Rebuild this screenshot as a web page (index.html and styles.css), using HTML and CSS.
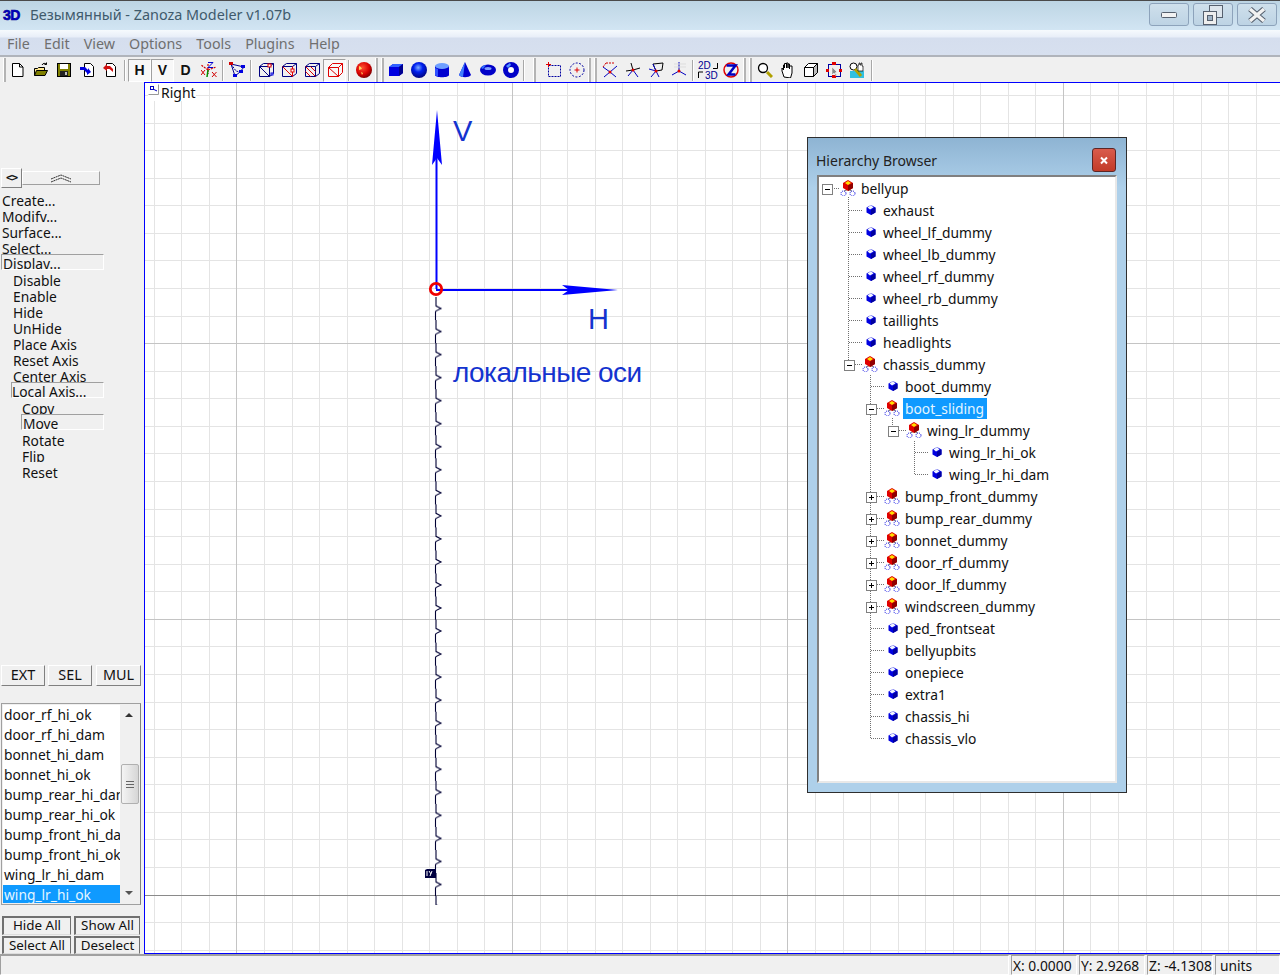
FILE: index.html
```html
<!DOCTYPE html>
<html lang="ru">
<head>
    <meta charset="UTF-8">
    <meta name="viewport" content="width=device-width, initial-scale=1.0">
    <title>Zanoza Modeler</title>
    <link rel="stylesheet" href="styles.css">
</head>
<body>
    <!-- Общие иконки -->
    <svg class="defs" width="0" height="0">
        <symbol id="i-new" viewBox="0 0 16 16"><path d="M2.500 1.500h7l3.500 3.500v9.500H2.500z" fill="#fff" stroke="#000"/><path d="M9.500 1.500v3.500h3.500" fill="none" stroke="#000"/></symbol>
        <symbol id="i-open" viewBox="0 0 16 16"><path d="M1.500 13.500v-7h3l1-1h6v3" fill="#ffe890" stroke="#000"/><path d="M1.500 13.500l2-5h11l-2.500 5z" fill="#808000" stroke="#000"/><path d="M9 3c1-2 3-2 4.500-1M13.500 .5v2h-2" fill="none" stroke="#000"/></symbol>
        <symbol id="i-save" viewBox="0 0 16 16" shape-rendering="crispEdges"><rect x="1.500" y="1.500" width="13" height="13" fill="#808000" stroke="#000"/><rect x="4" y="2" width="8" height="5" fill="#fff"/><rect x="4" y="9" width="8" height="5" fill="#222"/><rect x="9" y="10" width="2" height="3" fill="#c0c0c0"/></symbol>
        <symbol id="i-doc-in" viewBox="0 0 16 16"><path d="M5.500 1.500h6l3 3v10h-9z" fill="#fff" stroke="#000"/><path d="M1 5h5l3 3V6l3 4-4 3v-2L5 8H1z" fill="#0000e0"/></symbol>
        <symbol id="i-doc-out" viewBox="0 0 16 16"><path d="M4.500 1.500h6l3 3v10h-9z" fill="#fff" stroke="#000"/><path d="M1 6l4-4v2h3l3 3v3L7.500 7H5v2z" fill="#d01010"/></symbol>
        <symbol id="i-axes" viewBox="0 0 16 16"><path d="M7 2v10M7 8l8-3M7 8L0 3" fill="none" stroke="#d00000" stroke-width="1.200" stroke-dasharray="2 1"/><path d="M7 8l-1 7" stroke="#009000" stroke-width="1.500"/><path d="M7 .5h5M12 .5l-5 5M7 5.500h5" fill="none" stroke="#0000d0"/><path d="M11 10l4.500 5M15.500 10l-4.500 5M0 8l4 5M4 8l-4 5" stroke="#d00000"/></symbol>
        <symbol id="i-link" viewBox="0 0 16 16"><path d="M2 2l13 3-4 5-5 4z" fill="none" stroke="#000090"/><path d="M2 2l5 7 4 1" fill="none" stroke="#000090" stroke-dasharray="2 1"/><g shape-rendering="crispEdges"><rect x="0" y="0" width="4" height="3" fill="#d00000"/><rect x="12" y="3" width="4" height="3" fill="#0000e0"/><rect x="10" y="8" width="4" height="3" fill="#0000e0"/><rect x="4" y="12" width="4" height="3" fill="#0000e0"/></g></symbol>
        <symbol id="i-cube-a" viewBox="0 0 16 16"><path d="M1.500 4.500h10v10h-10zM1.500 4.500l4-3h10v10l-4 3M11.500 4.500l4-3M1.500 4.500l10 10" fill="none" stroke="#000080"/><rect x="10" y="2" width="3" height="3" fill="#fff" stroke="#e00000"/><rect x="13" y="11" width="2" height="2" fill="#fff" stroke="#0000e0"/></symbol>
        <symbol id="i-cube-b" viewBox="0 0 16 16"><path d="M1.500 4.500h10v10h-10zM1.500 4.500l4-3h10v10l-4 3M11.500 4.500l4-3" fill="none" stroke="#000080"/><path d="M11.500 4.500v10M1.500 4.500l10 10" fill="none" stroke="#e00000"/><rect x="10" y="7" width="3" height="3" fill="#fff" stroke="#e00000"/></symbol>
        <symbol id="i-cube-c" viewBox="0 0 16 16"><path d="M1.500 4.500h10v10h-10zM1.500 4.500l4-3h10v10l-4 3M11.500 4.500l4-3" fill="none" stroke="#000080"/><path d="M1.500 4.500l10 10M1.500 9.500l5 5M6.500 4.500l5 5" fill="none" stroke="#e00000"/></symbol>
        <symbol id="i-cube-d" viewBox="0 0 16 16"><path d="M1.500 5.500h10v9h-10zM1.500 5.500l4-4h10v9l-4 4M11.500 5.500l4-4M1.500 5.500l10 9" fill="none" stroke="#e00000"/></symbol>
        <radialGradient id="g-red" cx=".4" cy=".35" r=".7"><stop offset="0" stop-color="#ff5030"/><stop offset=".6" stop-color="#d80000"/><stop offset="1" stop-color="#700000"/></radialGradient>
        <radialGradient id="g-blue" cx=".45" cy=".35" r=".7"><stop offset="0" stop-color="#80b0ff"/><stop offset=".4" stop-color="#0020f0"/><stop offset="1" stop-color="#000070"/></radialGradient>
        <symbol id="i-ball-red" viewBox="0 0 16 16"><circle cx="8" cy="8" r="8" fill="url(#g-red)"/><path d="M3 4l2 1 1 2-3 1zM5 10l2 1-1 2z" fill="#ffd060"/></symbol>
        <symbol id="i-box" viewBox="0 0 16 16"><path d="M1 5l4-3h10v9l-4 3H1z" fill="#0000e0"/><path d="M1 5l4-3h10l-4 3z" fill="#3060ff"/><path d="M11 5l4-3v9l-4 3z" fill="#000090"/></symbol>
        <symbol id="i-ball" viewBox="0 0 16 16"><circle cx="8" cy="8" r="8" fill="url(#g-blue)"/></symbol>
        <symbol id="i-can" viewBox="0 0 16 16"><path d="M1 4v9c0 3 14 3 14 0V4z" fill="#0000d0"/><ellipse cx="8" cy="4" rx="7" ry="3" fill="#70a0ff"/><path d="M1 6v7l3 2V7z" fill="#3050ff"/></symbol>
        <symbol id="i-cone" viewBox="0 0 16 16"><path d="M8 0l6 13c-2 3-10 3-12 0z" fill="#0000d0"/><path d="M8 0L2 13c1 1 3 2 4 2z" fill="#4080ff"/></symbol>
        <symbol id="i-disc" viewBox="0 0 16 16"><ellipse cx="8" cy="8" rx="8" ry="5.500" fill="#0000c8"/><ellipse cx="8" cy="6.500" rx="3.500" ry="1.500" fill="#80a0ff"/><path d="M1 6c1-2 3-3 5-3L3 7z" fill="#3070ff"/></symbol>
        <symbol id="i-ring" viewBox="0 0 16 16"><circle cx="8" cy="8" r="5.500" fill="none" stroke="#0000c8" stroke-width="5"/><circle cx="8" cy="8" r="2.500" fill="#fff"/><path d="M3 4l4-3 1 2-3 3z" fill="#5090ff"/></symbol>
        <symbol id="i-sel-rect" viewBox="0 0 16 16"><rect x="2.500" y="3.500" width="12" height="11" fill="none" stroke="#0000a0" stroke-dasharray="2 1"/><path d="M0 2.500h5M2.500 0v5" stroke="#e00000"/></symbol>
        <symbol id="i-sel-circle" viewBox="0 0 16 16"><circle cx="8" cy="8" r="7" fill="none" stroke="#0000a0" stroke-dasharray="2 1.500"/><path d="M5.500 8h5M8 5.500v5" stroke="#e00000"/></symbol>
        <symbol id="i-star-a" viewBox="0 0 16 16"><path d="M8 10L1 5M8 10l7-6M8 10l-6 5M8 10l6 5" fill="none" stroke="#0000c0"/><path d="M4 1h8M1 5l3-4" fill="none" stroke="#d00000" stroke-dasharray="2 1"/><circle cx="8" cy="10" r="1.500" fill="#e00000"/></symbol>
        <symbol id="i-star-b" viewBox="0 0 16 16"><path d="M8 8L1 9M8 8l7-2M8 8L6 1" fill="none" stroke="#000"/><path d="M8 8l-5 6M8 8l5 7" fill="none" stroke="#0000c0"/><circle cx="8" cy="8" r="1.500" fill="#e00000"/></symbol>
        <symbol id="i-star-c" viewBox="0 0 16 16"><path d="M5 2l10-1-1 7-6 1z" fill="none" stroke="#000"/><path d="M8 9L1 7M8 9l-5 6M8 9l3 6M5 2l3 7" fill="none" stroke="#0000c0"/><circle cx="8" cy="9" r="1.500" fill="#e00000"/></symbol>
        <symbol id="i-star-d" viewBox="0 0 16 16"><path d="M8 0v9M8 9l7 4M8 9l-7 4" fill="none" stroke="#0000c0"/><path d="M3 2h12M3 5h12" stroke="#ddd"/><circle cx="8" cy="9" r="1.500" fill="#e00000"/></symbol>
        <symbol id="i-2d3d" viewBox="0 0 20 18"><text x="0" y="8" class="icon-text">2D</text><text x="7" y="17.500" class="icon-text">3D</text><path d="M19.500 2v5.500H15M.5 17v-6H5" fill="none" stroke="#000"/></symbol>
        <symbol id="i-ztoggle" viewBox="0 0 16 16"><circle cx="8" cy="8" r="7" fill="none" stroke="#e00000" stroke-width="1.500"/><path d="M3.500 3.500h9l-7 9h7" fill="none" stroke="#0000c0" stroke-width="2.500"/></symbol>
        <symbol id="i-zoom" viewBox="0 0 16 16"><circle cx="6" cy="6" r="4.500" fill="#fff" stroke="#000" stroke-width="1.300"/><path d="M10 10l5 5" stroke="#b0a000" stroke-width="3"/></symbol>
        <symbol id="i-hand" viewBox="0 0 16 16"><path d="M4 15l-2-6V6l1.500 2V3h1v3-4.500h2V6 1h1.500v5-4h1.500v5-3H12v7l-1.500 5z" fill="#fff" stroke="#000"/></symbol>
        <symbol id="i-white-cube" viewBox="0 0 16 16"><path d="M1.500 5.500l4-4h9v9l-4 4h-9z" fill="#fff" stroke="#000"/><path d="M10.500 5.500l4-4v9l-4 4z" fill="#bbb" stroke="#000"/><path d="M1.500 5.500h9v9" fill="none" stroke="#000"/></symbol>
        <symbol id="i-transform" viewBox="0 0 16 16"><rect x="2.500" y="2.500" width="12" height="12" fill="none" stroke="#0000a0"/><g fill="#e00000"><rect x="6" y="0" width="4" height="3"/><rect x="6" y="13" width="4" height="3"/><rect x="0" y="7" width="3" height="3"/><rect x="13" y="7" width="3" height="3"/></g><path d="M6 5v8l2-2 2 3 1-1-2-2 2-1z" fill="#888" stroke="#fff" stroke-width=".5"/></symbol>
        <symbol id="i-mix" viewBox="0 0 16 16"><rect x="1" y="9" width="14" height="7" fill="#30c0e0"/><circle cx="4.500" cy="4.500" r="3.500" fill="#fff" stroke="#000"/><path d="M6 7l6 7" stroke="#b0a000" stroke-width="3"/><path d="M9 9V3h1V1h1v2h1V1h1v3h1v5z" fill="#fff" stroke="#000" stroke-width=".7"/></symbol>
        <symbol id="n-group" viewBox="0 0 16 16"><path d="M8 9L3 12M8 9l5 3" stroke="#808080" stroke-width="1.200"/><circle cx="3.500" cy="13.500" r="2.500" fill="#fff" stroke="#0000e0" stroke-dasharray="1 1"/><circle cx="12.500" cy="13.500" r="2.500" fill="#fff" stroke="#0000e0" stroke-dasharray="1 1"/><path d="M3 3l5-3 5 3v5l-5 3-5-3z" fill="#e00000"/><path d="M5 3l3-2 3 2-3 2z" fill="#ffe000"/><path d="M8 5.500l5-2.500v5l-5 3z" fill="#900000"/></symbol>
        <symbol id="n-leaf" viewBox="0 0 16 16"><path d="M9 3l4.500 2.500v5L9 13l-4.500-2.500v-5z" fill="#0000e0"/><path d="M9 3L5.500 5.500 8 7.500l3.500-2z" fill="#f0f4ff"/><path d="M9 8l4.500-2.500v5L9 13z" fill="#0000a0"/></symbol>
    </svg>

    <div class="titlebar">
        <span class="app-logo">3D</span>
        <span class="app-title">Безымянный - Zanoza Modeler v1.07b</span>
        <div class="win-buttons">
            <div class="win-btn"><svg width="18" height="8"><rect x="1.500" y="1.500" width="15" height="5" rx="1" fill="#f2f2f2" stroke="#56606e"/></svg></div>
            <div class="win-btn"><svg width="22" height="22"><rect x="7.500" y="1.500" width="13" height="12" fill="#dde5ec" stroke="#56606e"/><rect x="1.500" y="7.500" width="13" height="13" fill="#eee" stroke="#56606e"/><rect x="5.500" y="11.500" width="5" height="5" fill="#9fb3c6" stroke="#56606e"/></svg></div>
            <div class="win-btn"><svg width="20" height="16"><path d="M3 2l14 12M17 2L3 14" fill="none" stroke="#56606e" stroke-width="5.500"/><path d="M3 2l14 12M17 2L3 14" fill="none" stroke="#f2f2f2" stroke-width="3.500"/></svg></div>
        </div>
    </div>

    <div class="menubar">
        <span>File</span><span>Edit</span><span>View</span><span>Options</span><span>Tools</span><span>Plugins</span><span>Help</span>
    </div>

    <div class="toolbar">
        <span class="grip first"></span>
        <div class="tool"><svg><use href="#i-new"/></svg></div>
        <div class="tool"><svg><use href="#i-open"/></svg></div>
        <div class="tool"><svg><use href="#i-save"/></svg></div>
        <div class="tool"><svg><use href="#i-doc-in"/></svg></div>
        <div class="tool"><svg><use href="#i-doc-out"/></svg></div>
        <span class="sep"></span>
        <div class="tool pressed"><b>H</b></div>
        <div class="tool pressed"><b>V</b></div>
        <div class="tool"><b>D</b></div>
        <div class="tool"><svg><use href="#i-axes"/></svg></div>
        <span class="sep tight"></span>
        <div class="tool"><svg><use href="#i-link"/></svg></div>
        <span class="sep wide"></span>
        <div class="tool"><svg><use href="#i-cube-a"/></svg></div>
        <div class="tool"><svg><use href="#i-cube-b"/></svg></div>
        <div class="tool"><svg><use href="#i-cube-c"/></svg></div>
        <div class="tool pressed"><svg><use href="#i-cube-d"/></svg></div>
        <span class="sep after-cubes"></span>
        <div class="tool"><svg><use href="#i-ball-red"/></svg></div>
        <span class="grip"></span>
        <span class="grip near"></span>
        <div class="tool"><svg><use href="#i-box"/></svg></div>
        <div class="tool"><svg><use href="#i-ball"/></svg></div>
        <div class="tool"><svg><use href="#i-can"/></svg></div>
        <div class="tool"><svg><use href="#i-cone"/></svg></div>
        <div class="tool"><svg><use href="#i-disc"/></svg></div>
        <div class="tool"><svg><use href="#i-ring"/></svg></div>
        <span class="sep tail"></span>
        <span class="grip far"></span>
        <div class="tool"><svg><use href="#i-sel-rect"/></svg></div>
        <div class="tool"><svg><use href="#i-sel-circle"/></svg></div>
        <span class="grip"></span>
        <span class="grip mid"></span>
        <div class="tool"><svg><use href="#i-star-a"/></svg></div>
        <div class="tool"><svg><use href="#i-star-b"/></svg></div>
        <div class="tool"><svg><use href="#i-star-c"/></svg></div>
        <div class="tool"><svg><use href="#i-star-d"/></svg></div>
        <span class="sep before-2d"></span>
        <div class="tool"><svg class="wide-ico"><use href="#i-2d3d"/></svg></div>
        <div class="tool"><svg><use href="#i-ztoggle"/></svg></div>
        <span class="grip after-z"></span>
        <span class="grip mid"></span>
        <div class="tool"><svg><use href="#i-zoom"/></svg></div>
        <div class="tool"><svg><use href="#i-hand"/></svg></div>
        <div class="tool"><svg><use href="#i-white-cube"/></svg></div>
        <div class="tool"><svg><use href="#i-transform"/></svg></div>
        <div class="tool"><svg><use href="#i-mix"/></svg></div>
        <span class="sep"></span>
    </div>

    <div class="main">
        <div class="side">
            <div class="fold-row">
                <div class="fold-btn">&lt;&gt;</div>
                <div class="fold-bar"><svg width="22" height="9"><path d="M1 5l10-4 10 4M1 8l10-4 10 4" fill="none" stroke="#333" stroke-dasharray="2 .5"/></svg></div>
            </div>

            <div class="cmds">
                <div class="cmd">Create...</div>
                <div class="cmd cut">Modify...</div>
                <div class="cmd">Surface...</div>
                <div class="cmd cut">Select...</div>
                <div class="cmd open">Display...</div>
                <div class="cmd l1">Disable</div>
                <div class="cmd l1">Enable</div>
                <div class="cmd l1">Hide</div>
                <div class="cmd l1">UnHide</div>
                <div class="cmd l1">Place Axis</div>
                <div class="cmd l1">Reset Axis</div>
                <div class="cmd l1 cut">Center Axis</div>
                <div class="cmd l1 open">Local Axis...</div>
                <div class="cmd l2 cut">Copy</div>
                <div class="cmd l2 open">Move</div>
                <div class="cmd l2">Rotate</div>
                <div class="cmd l2 cut">Flip</div>
                <div class="cmd l2">Reset</div>
            </div>

            <div class="mode-row">
                <div class="btn">EXT</div>
                <div class="btn">SEL</div>
                <div class="btn last">MUL</div>
            </div>

            <div class="objects">
                <div class="obj-items">
                    <div>door_rf_hi_ok</div>
                    <div>door_rf_hi_dam</div>
                    <div>bonnet_hi_dam</div>
                    <div>bonnet_hi_ok</div>
                    <div>bump_rear_hi_dam</div>
                    <div>bump_rear_hi_ok</div>
                    <div>bump_front_hi_dam</div>
                    <div>bump_front_hi_ok</div>
                    <div>wing_lr_hi_dam</div>
                    <div class="selected">wing_lr_hi_ok</div>
                </div>
                <div class="scroll">
                    <span class="arrow up"></span>
                    <div class="thumb"><i></i><i></i><i></i></div>
                    <span class="arrow down"></span>
                </div>
            </div>

            <div class="show-grid">
                <div class="flat">Hide All</div>
                <div class="flat">Show All</div>
                <div class="flat">Select All</div>
                <div class="flat">Deselect</div>
            </div>
        </div>

        <div class="viewport">
            <svg class="grid" viewBox="145 83 1135 870">
                <path class="minor" d="M154 83V953M181 83V953M209 83V953M264 83V953M292 83V953M319 83V953M347 83V953M374 83V953M402 83V953M429 83V953M457 83V953M484 83V953M540 83V953M567 83V953M595 83V953M622 83V953M650 83V953M677 83V953M705 83V953M732 83V953M760 83V953M815 83V953M843 83V953M870 83V953M898 83V953M925 83V953M953 83V953M980 83V953M1008 83V953M1035 83V953M1090 83V953M1118 83V953M1146 83V953M1173 83V953M1201 83V953M1228 83V953M1256 83V953"/>
                <path class="minor" d="M145 95H1280M145 123H1280M145 150H1280M145 178H1280M145 205H1280M145 233H1280M145 260H1280M145 288H1280M145 316H1280M145 371H1280M145 398H1280M145 426H1280M145 453H1280M145 481H1280M145 509H1280M145 536H1280M145 564H1280M145 591H1280M145 646H1280M145 674H1280M145 702H1280M145 729H1280M145 757H1280M145 784H1280M145 812H1280M145 839H1280M145 867H1280M145 922H1280M145 950H1280"/>
                <path class="major" d="M236 83V953M512 83V953M787 83V953M1063 83V953M145 343H1280M145 619H1280"/>
                <path class="axis" d="M145 895H1280"/>

                <defs>
                    <pattern id="zigzag" x="429" y="297" width="14" height="23.040" patternUnits="userSpaceOnUse">
                        <path d="M7 0V9L12 11.500 7 14 6.500 15V23.040" fill="none" stroke="#000033" stroke-width="1.100"/>
                    </pattern>
                </defs>
                <rect x="429" y="297" width="14" height="608" fill="url(#zigzag)"/>
                <path d="M425 870l2-1h9v9h-11z" fill="#000040"/>
                <path d="M427 871v5M429 871l2 3M432 871l-2 5" stroke="#fff" fill="none"/>

                <path d="M436.500 289V150M436 290H590" stroke="#0000ff" stroke-width="2" fill="none"/>
                <path d="M437 110L442 165 437 158 432 165zM618 290L562 285 569 290 562 295z" fill="#0000ff"/>
                <circle cx="436" cy="289" r="5.700" fill="none" stroke="#f00000" stroke-width="2.800"/>
            </svg>

            <div class="view-name"><svg width="11" height="11"><path d="M.5 10.500V.5H10.500" fill="none" stroke="#fff"/><path d="M10.500 .5v10H.5" fill="none" stroke="#999"/><rect x="2.500" y="2.500" width="3" height="3" fill="#fff" stroke="#0000c0"/><path d="M5 5l4 2" stroke="#0000c0"/></svg>Right</div>

            <div class="mark mark-v">V</div>
            <div class="mark mark-h">H</div>
            <div class="mark note">локальные оси</div>

            <div class="browser">
                <div class="browser-head">
                    <span>Hierarchy Browser</span>
                    <div class="close-btn"><svg width="10" height="9"><path d="M2 1.500l6 6M8 1.500l-6 6" stroke="#fff" stroke-width="2"/></svg></div>
                </div>
                <div class="tree">
                    <svg class="twigs" viewBox="819 177 296 606">
                        <path d="M848.500 197V362M870.500 375V738M892.500 418V426M914.500 441V474"/>
                        <path d="M832 188.500H840M849 210.500H862M849 232.500H862M849 254.500H862M849 276.500H862M849 298.500H862M849 320.500H862M849 342.500H862M853 364.500H862"/>
                        <path d="M871 386.500H884M875 408.500H884M897 430.500H906M915 452.500H928M915 474.500H928"/>
                        <path d="M875 496.500H884M875 518.500H884M875 540.500H884M875 562.500H884M875 584.500H884M875 606.500H884M871 628.500H884M871 650.500H884M871 672.500H884M871 694.500H884M871 716.500H884M871 738.500H884"/>
                    </svg>

                    <div class="node"><span class="exp minus"></span><svg class="ico"><use href="#n-group"/></svg><span class="label">bellyup</span></div>
                    <div class="node d1"><span class="exp none"></span><svg class="ico"><use href="#n-leaf"/></svg><span class="label">exhaust</span></div>
                    <div class="node d1"><span class="exp none"></span><svg class="ico"><use href="#n-leaf"/></svg><span class="label">wheel_lf_dummy</span></div>
                    <div class="node d1"><span class="exp none"></span><svg class="ico"><use href="#n-leaf"/></svg><span class="label">wheel_lb_dummy</span></div>
                    <div class="node d1"><span class="exp none"></span><svg class="ico"><use href="#n-leaf"/></svg><span class="label">wheel_rf_dummy</span></div>
                    <div class="node d1"><span class="exp none"></span><svg class="ico"><use href="#n-leaf"/></svg><span class="label">wheel_rb_dummy</span></div>
                    <div class="node d1"><span class="exp none"></span><svg class="ico"><use href="#n-leaf"/></svg><span class="label">taillights</span></div>
                    <div class="node d1"><span class="exp none"></span><svg class="ico"><use href="#n-leaf"/></svg><span class="label">headlights</span></div>
                    <div class="node d1"><span class="exp minus"></span><svg class="ico"><use href="#n-group"/></svg><span class="label">chassis_dummy</span></div>
                    <div class="node d2"><span class="exp none"></span><svg class="ico"><use href="#n-leaf"/></svg><span class="label">boot_dummy</span></div>
                    <div class="node d2"><span class="exp minus"></span><svg class="ico"><use href="#n-group"/></svg><span class="label selected">boot_sliding</span></div>
                    <div class="node d3"><span class="exp minus"></span><svg class="ico"><use href="#n-group"/></svg><span class="label">wing_lr_dummy</span></div>
                    <div class="node d4"><span class="exp none"></span><svg class="ico"><use href="#n-leaf"/></svg><span class="label">wing_lr_hi_ok</span></div>
                    <div class="node d4"><span class="exp none"></span><svg class="ico"><use href="#n-leaf"/></svg><span class="label">wing_lr_hi_dam</span></div>
                    <div class="node d2"><span class="exp plus"></span><svg class="ico"><use href="#n-group"/></svg><span class="label">bump_front_dummy</span></div>
                    <div class="node d2"><span class="exp plus"></span><svg class="ico"><use href="#n-group"/></svg><span class="label">bump_rear_dummy</span></div>
                    <div class="node d2"><span class="exp plus"></span><svg class="ico"><use href="#n-group"/></svg><span class="label">bonnet_dummy</span></div>
                    <div class="node d2"><span class="exp plus"></span><svg class="ico"><use href="#n-group"/></svg><span class="label">door_rf_dummy</span></div>
                    <div class="node d2"><span class="exp plus"></span><svg class="ico"><use href="#n-group"/></svg><span class="label">door_lf_dummy</span></div>
                    <div class="node d2"><span class="exp plus"></span><svg class="ico"><use href="#n-group"/></svg><span class="label">windscreen_dummy</span></div>
                    <div class="node d2"><span class="exp none"></span><svg class="ico"><use href="#n-leaf"/></svg><span class="label">ped_frontseat</span></div>
                    <div class="node d2"><span class="exp none"></span><svg class="ico"><use href="#n-leaf"/></svg><span class="label">bellyupbits</span></div>
                    <div class="node d2"><span class="exp none"></span><svg class="ico"><use href="#n-leaf"/></svg><span class="label">onepiece</span></div>
                    <div class="node d2"><span class="exp none"></span><svg class="ico"><use href="#n-leaf"/></svg><span class="label">extra1</span></div>
                    <div class="node d2"><span class="exp none"></span><svg class="ico"><use href="#n-leaf"/></svg><span class="label">chassis_hi</span></div>
                    <div class="node d2"><span class="exp none"></span><svg class="ico"><use href="#n-leaf"/></svg><span class="label">chassis_vlo</span></div>
                </div>
            </div>
        </div>
    </div>

    <div class="statusbar">
        <div class="cell grow"></div>
        <div class="cell x">X: 0.0000</div>
        <div class="cell y">Y: 2.9268</div>
        <div class="cell z">Z: -4.1308</div>
        <div class="cell units">units</div>
    </div>
</body>
</html>
```

FILE: styles.css
```css
* {
    margin: 0;
    padding: 0;
    box-sizing: border-box;
}
html, body {
    width: 1280px;
    height: 975px;
    overflow: hidden;
}
body {
    display: flex;
    flex-direction: column;
    font-family: "Noto Sans", sans-serif;
    font-size: 13.8px;
    color: #111;
    background: #f0f0f0;
}
.defs {
    position: absolute;
}
.icon-text {
    font-family: "Liberation Sans", sans-serif;
    font-size: 10px;
    fill: #000090;
}

/* Заголовок окна */
.titlebar {
    height: 30px;
    display: flex;
    align-items: center;
    flex: none;
    border-top: 1px solid #4a4a4a;
    background: linear-gradient(#bdd5e4, #d2e5f3);
    padding: 0 0 2px 3px;
}
.app-logo {
    width: 27px;
    font-family: "Liberation Sans", sans-serif;
    font-weight: bold;
    font-size: 14px;
    letter-spacing: -0.5px;
    color: #0000c8;
    -webkit-text-stroke: 0.6px #000090;
}
.app-title {
    font-size: 14.4px;
    color: #3f5a6c;
}
.win-buttons {
    margin-left: auto;
    display: flex;
    gap: 4px;
    padding-right: 3px;
    align-self: flex-start;
    padding-top: 2px;
}
.win-btn {
    width: 40px;
    height: 23px;
    display: flex;
    align-items: center;
    justify-content: center;
    border: 1px solid #8da3bb;
    border-radius: 3px;
    background: linear-gradient(#cfe0ec, #bdd3e4);
}

/* Меню */
.menubar {
    height: 27px;
    flex: none;
    display: flex;
    align-items: center;
    gap: 14.1px;
    padding: 2px 7px 0;
    font-size: 14.3px;
    color: #6f6f6f;
    background: linear-gradient(#f6fafd 0, #e8eef8 7px, #d5deee 8px, #d7e0ef 100%);
    border-bottom: 2px solid #b0b4bb;
}

/* Панель инструментов */
.toolbar {
    height: 25px;
    flex: none;
    display: flex;
    align-items: center;
    padding-top: 1px;
    background: #f0f0f0;
}
.tool {
    width: 23px;
    height: 23px;
    flex: none;
    display: flex;
    align-items: center;
    justify-content: center;
    font-family: "Liberation Sans", sans-serif;
    font-size: 14px;
}
.tool svg {
    width: 16px;
    height: 16px;
}
.tool svg.wide-ico {
    width: 20px;
    height: 18px;
}
.tool.pressed {
    border: 1px solid;
    border-color: #a0a0a0 #fff #fff #a0a0a0;
    background: #f8f8f8;
}
.sep {
    width: 2px;
    height: 21px;
    margin: 0 2px 0 3px;
    border-left: 1px solid #a8a8a8;
    border-right: 1px solid #fff;
}
.sep.tight {
    margin: 0 1px 0 2px;
}
.sep.wide, .sep.after-cubes, .sep.before-2d {
    margin: 0 2px 0 2px;
}
.sep.tail {
    margin: 0 0 0 1px;
}
.grip {
    width: 3px;
    height: 24px;
    border-right: 2px solid #b4b4b4;
    border-left: 1px solid #fff;
}
.grip.first {
    margin: 0 0 0 3px;
}
.grip.near {
    margin-left: 3px;
}
.grip.far {
    margin: 0 6px 0 8px;
}
.grip.after-z {
    margin-left: 1px;
}
.grip.mid {
    margin: 0 1px 0 3px;
}

/* Основная область */
.main {
    flex: 1;
    display: flex;
    min-height: 0;
}
.side {
    width: 144px;
    flex: none;
    display: flex;
    flex-direction: column;
    overflow: hidden;
}
.fold-row {
    display: flex;
    align-items: center;
    margin-top: 86px;
    padding-left: 1px;
    height: 20px;
}
.fold-btn {
    width: 21px;
    height: 20px;
    border: 1px solid;
    border-color: #fff #808080 #808080 #fff;
    font-family: "DejaVu Sans Mono", monospace;
    font-size: 11px;
    font-weight: bold;
    line-height: 18px;
    text-align: center;
    letter-spacing: -1px;
}
.fold-bar {
    width: 78px;
    height: 14px;
    border: 1px solid;
    border-color: #fff #a0a0a0 #a0a0a0 #fff;
    display: flex;
    align-items: center;
    justify-content: center;
}
.cmds {
    margin-top: 5px;
}
.cmd {
    height: 16px;
    width: 104px;
    padding-left: 2px;
    line-height: 16px;
    overflow: hidden;
    white-space: nowrap;
}
.cmd.cut {
    height: 13px;
    margin-bottom: 3px;
}
.cmd.open {
    border: 1px solid;
    border-color: #a0a0a0 #fff #fff #a0a0a0;
    line-height: 18px;
    padding-left: 1px;
    margin-top: -3px;
    margin-bottom: 3px;
    margin-left: 1px;
    width: 103px;
}
.cmd.l1 {
    padding-left: 13px;
}
.cmd.l2 {
    padding-left: 22px;
}
.cmd.l1.open {
    margin-left: 11px;
    width: 93px;
    padding-left: 0;
}
.cmd.l2.open {
    margin-left: 21px;
    width: 83px;
    padding-left: 1px;
}
.mode-row {
    margin-top: auto;
    display: flex;
    gap: 3px;
    padding-left: 1px;
}
.btn {
    width: 44px;
    height: 21px;
    border: 1px solid;
    border-color: #fff #808080 #808080 #fff;
    text-align: center;
    font-size: 14.4px;
    line-height: 17px;
}
.btn.last {
    width: 45px;
    margin-left: 1px;
}
.objects {
    margin: 17px 3px 0 1px;
    height: 202px;
    display: flex;
    border: 1px solid #a0a0a0;
    border-right-color: #808080;
    padding: 1px;
}
.obj-items {
    width: 117px;
    flex: none;
    background: #fff;
    overflow: hidden;
}
.obj-items div {
    height: 20px;
    line-height: 20px;
    padding-left: 1px;
    white-space: nowrap;
}
.obj-items .selected {
    background: #0f9aff;
    color: #e4f6ff;
}
.scroll {
    flex: 1;
    display: flex;
    flex-direction: column;
    align-items: center;
    position: relative;
}
.arrow {
    position: absolute;
    left: 5px;
    border-left: 4px solid transparent;
    border-right: 4px solid transparent;
}
.arrow.up {
    top: 8px;
    border-bottom: 4px solid #333;
}
.arrow.down {
    bottom: 8px;
    border-top: 4px solid #555;
}
.thumb {
    margin-top: 59px;
    width: 18px;
    height: 40px;
    border: 1px solid #b0b0b0;
    border-radius: 2px;
    background: linear-gradient(90deg, #f4f4f4, #d6d6d6);
    display: flex;
    flex-direction: column;
    align-items: center;
    justify-content: center;
    gap: 2px;
}
.thumb i {
    width: 8px;
    height: 1px;
    background: #666;
}
.show-grid {
    margin-top: 11px;
    padding: 0 3px 0 2px;
    display: grid;
    grid-template-columns: 69px 66px;
    column-gap: 3px;
    row-gap: 1px;
}
.flat {
    height: 19px;
    border: 1px solid;
    border-width: 2px 1px 1px 2px;
    border-color: #707070 #707070 #ddd #707070;
    text-align: center;
    line-height: 14px;
    font-size: 13.4px;
    white-space: nowrap;
}
.flat:nth-child(n+3) {
    height: 18px;
}

/* Окно проекции */
.viewport {
    flex: 1;
    position: relative;
    background: #fff;
    border-top: 1px solid #0000ff;
    border-left: 1px solid #0000ff;
    border-bottom: 1px solid #0000ff;
    overflow: hidden;
}
.grid {
    position: absolute;
    left: 0;
    top: 0;
    width: 1135px;
    height: 870px;
}
.grid .minor, .grid .major, .grid .axis {
    fill: none;
    shape-rendering: crispEdges;
}
.minor {
    stroke: #e4e4e4;
}
.major {
    stroke: #c4c4c4;
}
.axis {
    stroke: #8a8a8a;
}
.view-name {
    position: absolute;
    left: 3px;
    top: 0;
    display: flex;
    align-items: center;
    gap: 2px;
    height: 18px;
    font-size: 14px;
    background: #fff;
}
.view-name svg {
    margin-top: -6px;
}
.mark {
    position: absolute;
    font-family: "Liberation Sans", sans-serif;
    color: #1433cf;
    line-height: 1;
    white-space: nowrap;
}
.mark-v {
    left: 308px;
    top: 34px;
    font-size: 29px;
}
.mark-h {
    left: 443px;
    top: 222px;
    font-size: 29px;
}
.note {
    left: 308px;
    top: 276px;
    font-size: 28px;
    letter-spacing: -0.55px;
}

/* Окно иерархии */
.browser {
    position: absolute;
    left: 662px;
    top: 54px;
    width: 320px;
    height: 656px;
    border: 1px solid #2e2e2e;
    padding: 0 9px 9px;
    background: linear-gradient(#8eb4d3, #aed0ea 50px);
    display: flex;
    flex-direction: column;
}
.browser-head {
    height: 37px;
    flex: none;
    display: flex;
    align-items: center;
    justify-content: space-between;
    padding-top: 7px;
    margin-left: -1px;
    color: #222;
    font-size: 14px;
}
.close-btn {
    width: 24px;
    height: 24px;
    margin-right: 1px;
    display: flex;
    align-items: center;
    justify-content: center;
    border: 1px solid #5c2626;
    border-radius: 3px;
    background: linear-gradient(#d95c4c, #c23b28);
}
.tree {
    flex: 1;
    position: relative;
    background: #fff;
    border: 2px solid;
    border-color: #808080 #e8e8e8 #e8e8e8 #808080;
}
.twigs {
    position: absolute;
    left: 0;
    top: 0;
    width: 296px;
    height: 606px;
    pointer-events: none;
}
.twigs path {
    fill: none;
    stroke: #707070;
    stroke-dasharray: 1 1;
    shape-rendering: crispEdges;
}
.node {
    height: 22px;
    display: flex;
    align-items: center;
    position: relative;
    white-space: nowrap;
}
.d1 {
    padding-left: 22px;
}
.d2 {
    padding-left: 44px;
}
.d3 {
    padding-left: 66px;
}
.d4 {
    padding-left: 88px;
}
.exp {
    width: 21px;
    height: 9px;
    flex: none;
    position: relative;
}
.minus::before, .plus::before {
    content: "";
    position: absolute;
    left: 3px;
    top: 0;
    width: 9px;
    height: 9px;
    border: 1px solid #808080;
    background: linear-gradient(#000, #000) center / 5px 1px no-repeat #fff;
}
.plus::before {
    background:
        linear-gradient(#000, #000) center / 5px 1px no-repeat,
        linear-gradient(#000, #000) center / 1px 5px no-repeat #fff;
}
.ico {
    width: 16px;
    height: 16px;
    flex: none;
}
.label {
    margin-left: 3px;
    padding: 0 2px;
    line-height: 21px;
}
.label.selected {
    padding-right: 3px;
    background: #0f9aff;
    color: #e4f6ff;
}

/* Строка состояния */
.statusbar {
    height: 21px;
    flex: none;
    display: flex;
    gap: 2px;
    background: #f0f0f0;
    border-top: 1px solid #a0a0a0;
}
.cell {
    height: 20px;
    padding: 1px 0 0 1px;
    border: 1px solid;
    border-color: #a0a0a0 #fff #fff #a0a0a0;
    overflow: hidden;
    white-space: nowrap;
    line-height: 18px;
}
.cell.grow {
    flex: 1;
}
.cell.x, .cell.y, .cell.z {
    width: 66px;
}
.cell.units {
    width: 65px;
    padding-left: 4px;
}
```
